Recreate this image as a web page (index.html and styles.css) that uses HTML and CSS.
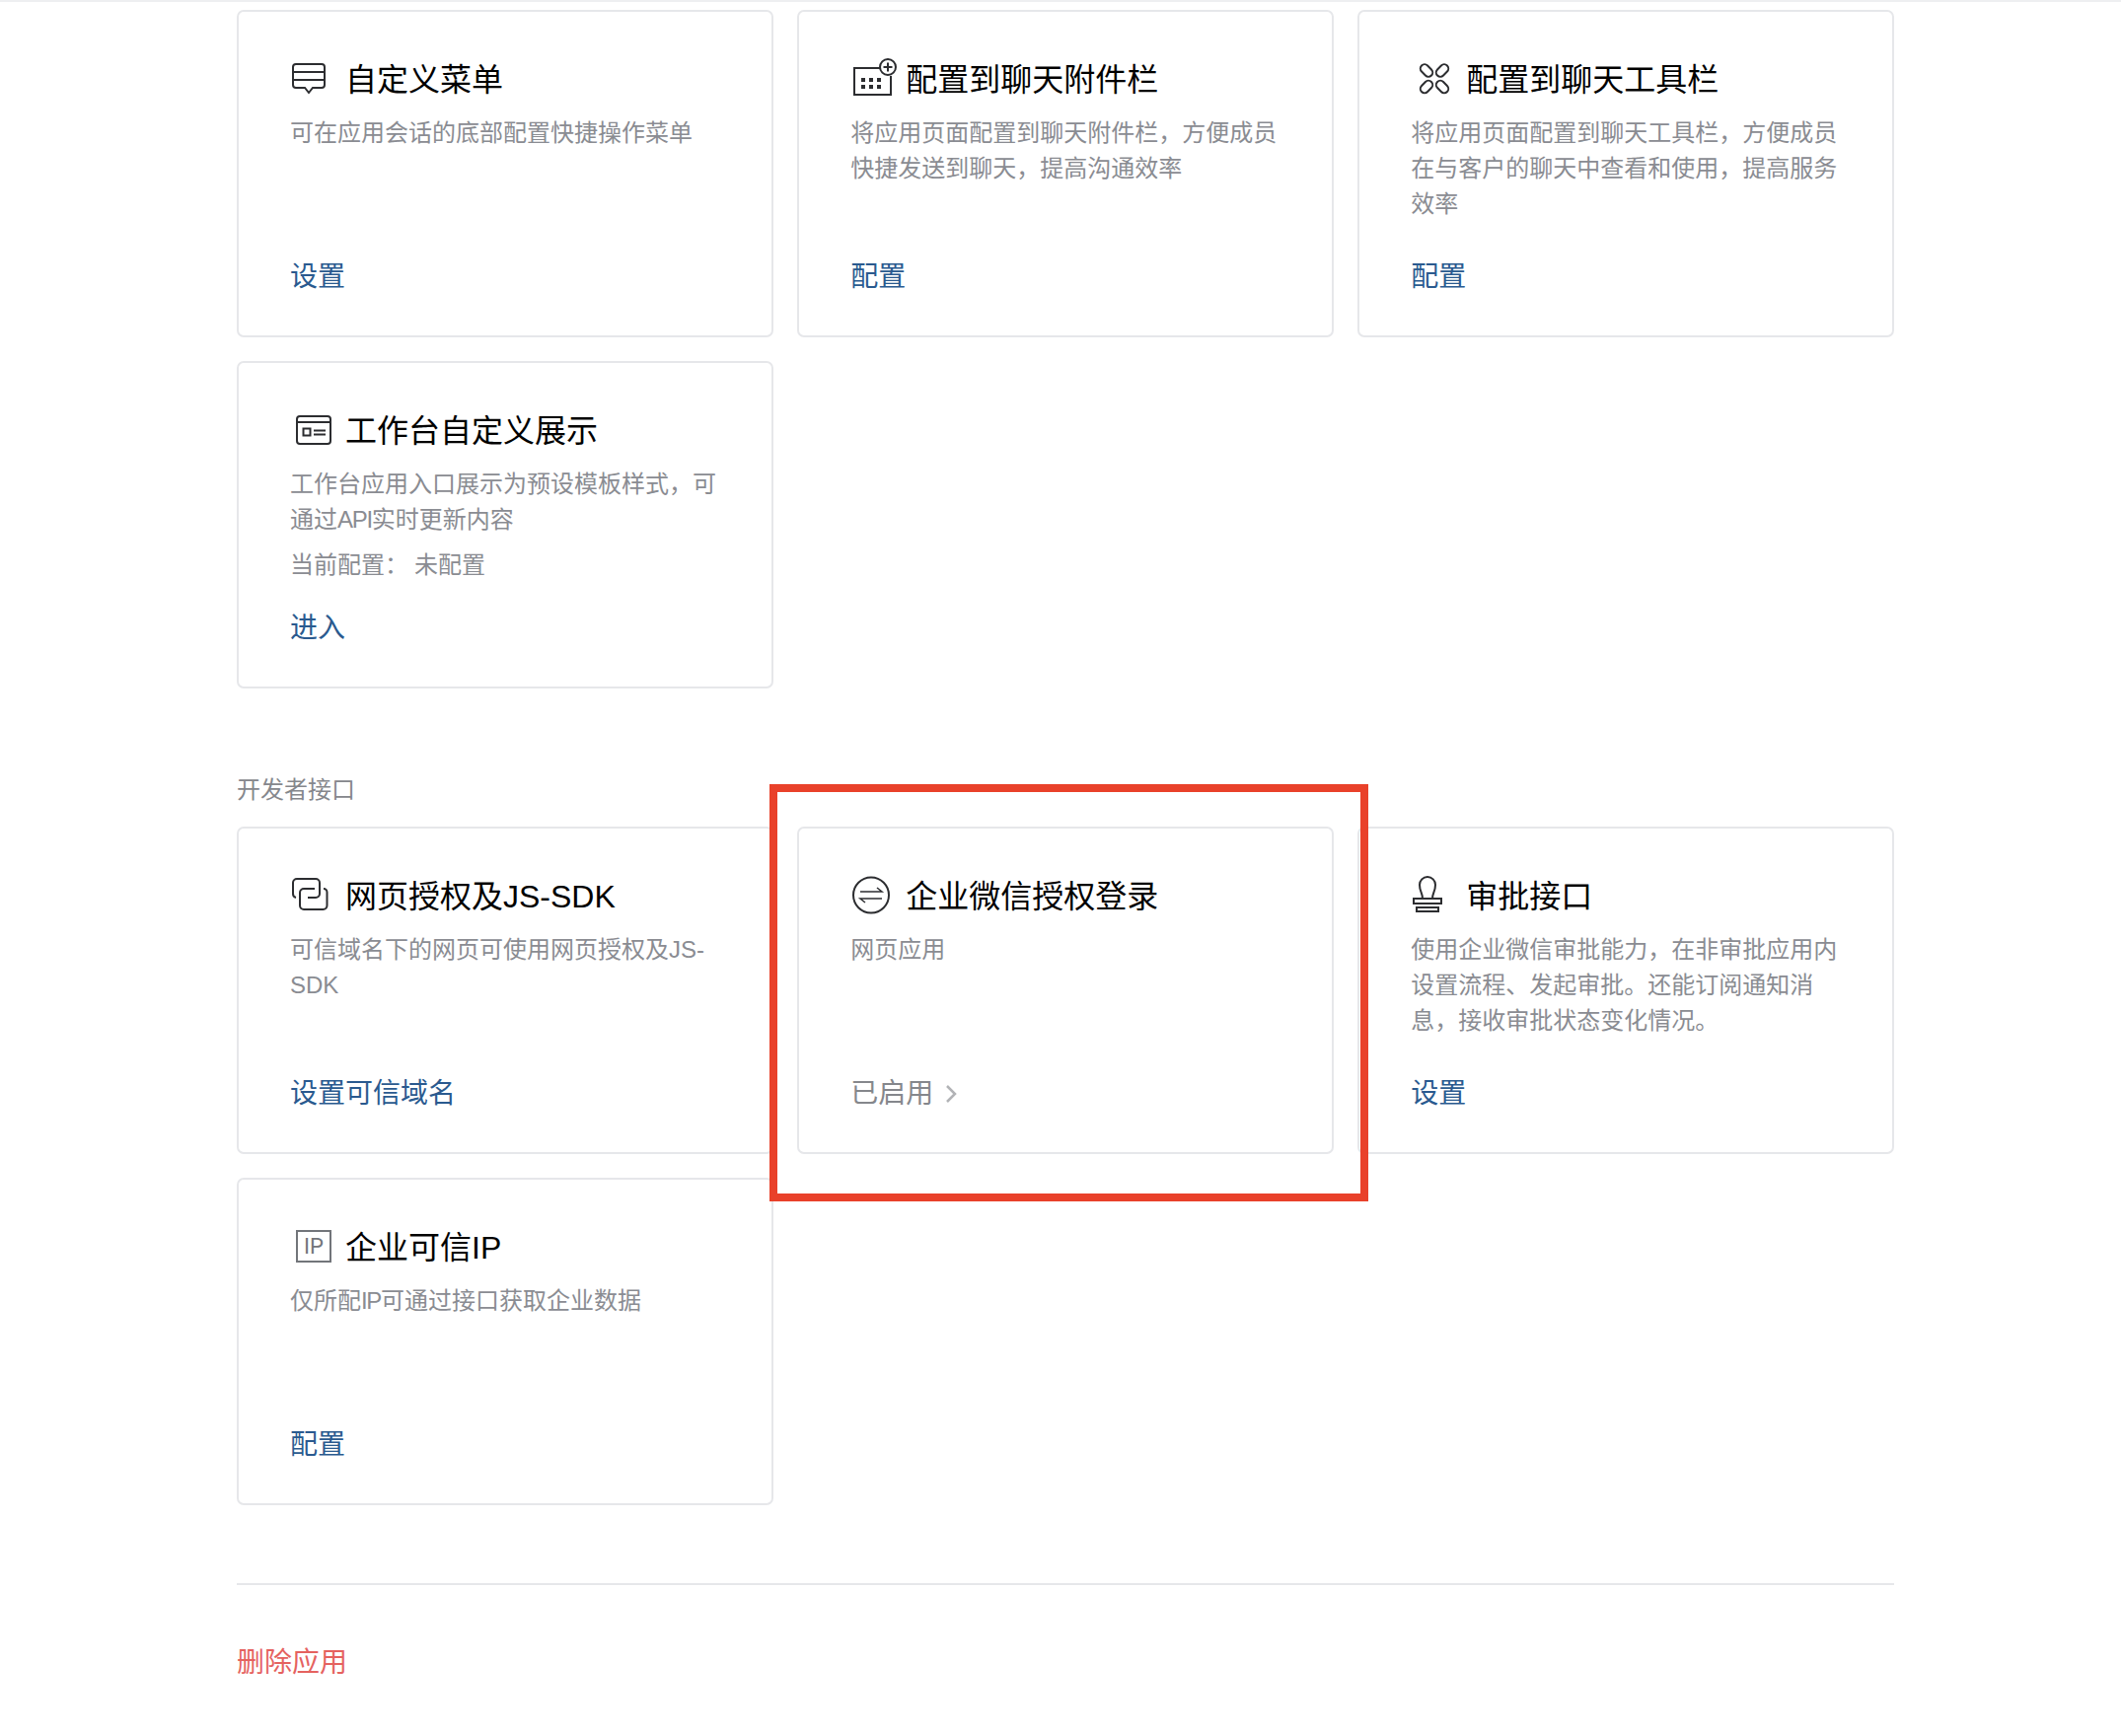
FILE: index.html
```html
<!DOCTYPE html>
<html lang="zh-CN">
<head>
<meta charset="utf-8">
<title>应用管理</title>
<link rel="stylesheet" href="styles.css">
</head>
<body>
<main class="page">
  <section class="grid">
    <article class="card">
      <h3 class="card-title">
        <svg class="icon" viewBox="0 0 44 44"><path d="M6 7h26a3 3 0 0 1 3 3v18a3 3 0 0 1-3 3h-9l-4 5-4-5H6a3 3 0 0 1-3-3V10a3 3 0 0 1 3-3zM3 15h32M3 23h32"/></svg>
        <span>自定义菜单</span>
      </h3>
      <p class="desc">可在应用会话的底部配置快捷操作菜单</p>
      <a class="action">设置</a>
    </article>
    <article class="card">
      <h3 class="card-title">
        <svg class="icon" viewBox="0 0 44 44"><path d="M30 11H4v27h37V19"/><circle cx="38" cy="10" r="8"/><path d="M38 5.500v9M33.500 10h9"/><path class="dots" d="M11 21h4v4h-4zM19 21h4v4h-4zM27 21h4v4h-4zM11 28h4v4h-4zM19 28h4v4h-4zM27 28h4v4h-4z"/></svg>
        <span>配置到聊天附件栏</span>
      </h3>
      <p class="desc">将应用页面配置到聊天附件栏，方便成员快捷发送到聊天，提高沟通效率</p>
      <a class="action">配置</a>
    </article>
    <article class="card">
      <h3 class="card-title">
        <svg class="icon" viewBox="0 0 44 44"><rect x="9" y="9.250" width="14" height="8.500" rx="4.250" transform="rotate(45 16 13.500)"/><rect x="25" y="9.250" width="14" height="8.500" rx="4.250" transform="rotate(-45 32 13.500)"/><rect x="9" y="25.750" width="14" height="8.500" rx="4.250" transform="rotate(-45 16 30)"/><rect x="25" y="25.750" width="14" height="8.500" rx="4.250" transform="rotate(45 32 30)"/></svg>
        <span>配置到聊天工具栏</span>
      </h3>
      <p class="desc">将应用页面配置到聊天工具栏，方便成员在与客户的聊天中查看和使用，提高服务效率</p>
      <a class="action">配置</a>
    </article>
    <article class="card">
      <h3 class="card-title">
        <svg class="icon" viewBox="0 0 44 44"><rect x="7" y="8" width="34" height="28" rx="3"/><path d="M7 14h34M13.500 20.500h7v7h-7zM24 22.500h12M24 26.500h12"/></svg>
        <span>工作台自定义展示</span>
      </h3>
      <p class="desc">工作台应用入口展示为预设模板样式，可<br>通过<span class="tight">API</span>实时更新内容</p>
      <p class="meta"><span class="meta-label">当前配置：</span><span>未配置</span></p>
      <a class="action">进入</a>
    </article>
  </section>

  <h2 class="section-label">开发者接口</h2>

  <section class="grid">
    <article class="card">
      <h3 class="card-title">
        <svg class="icon" viewBox="0 0 44 44"><path d="M6 24a4 4 0 0 1-3-4V9a4 4 0 0 1 4-4h19a4 4 0 0 1 4 4v11a4 4 0 0 1-4 4h-8"/><path d="M34 15a3.500 3.500 0 0 1 3.500 3.500V32a4 4 0 0 1-4 4H14a4 4 0 0 1-4-4V19a4 4 0 0 1 4-4h11"/></svg>
        <span>网页授权及JS-SDK</span>
      </h3>
      <p class="desc">可信域名下的网页可使用网页授权及JS-SDK</p>
      <a class="action">设置可信域名</a>
    </article>
    <article class="card card-highlighted">
      <h3 class="card-title">
        <svg class="icon" viewBox="0 0 44 44"><circle cx="21" cy="21.500" r="18"/><path class="thin" d="M10 18h22l-5-4M32 25H10l5 4"/></svg>
        <span>企业微信授权登录</span>
      </h3>
      <p class="desc">网页应用</p>
      <a class="action action-muted">已启用<svg class="chevron" viewBox="0 0 12 20"><path d="M2 2l8 8-8 8"/></svg></a>
      <div class="highlight"></div>
    </article>
    <article class="card">
      <h3 class="card-title">
        <svg class="icon" viewBox="0 0 44 44"><path d="M12 25c0-6-3-7-3-14a8 8 0 0 1 16 0c0 7-3 8-3 14"/><path d="M3 25h28v5H3zM6 34h22v4H6z"/></svg>
        <span>审批接口</span>
      </h3>
      <p class="desc">使用企业微信审批能力，在非审批应用内设置流程、发起审批。还能订阅通知消息，接收审批状态变化情况。</p>
      <a class="action">设置</a>
    </article>
    <article class="card">
      <h3 class="card-title">
        <svg class="icon icon-grey" viewBox="0 0 44 44"><rect x="7" y="6" width="34" height="31"/><text class="icon-text" x="24" y="29">IP</text></svg>
        <span>企业可信IP</span>
      </h3>
      <p class="desc">仅所配<span class="tight">IP</span>可通过接口获取企业数据</p>
      <a class="action">配置</a>
    </article>
  </section>

  <hr class="divider">
  <a class="danger">删除应用</a>
</main>
</body>
</html>
```
FILE: styles.css
```css
* { box-sizing: border-box; }
html, body { margin: 0; padding: 0; background: #fff; }
body {
  font-family: "Liberation Sans", "Noto Sans CJK SC", sans-serif;
  color: #000;
  border-top: 2px solid #eeeff1;
}
.page {
  padding: 8px 230px 53px 240px;
}
.grid {
  display: grid;
  grid-template-columns: repeat(3, 1fr);
  column-gap: 24.500px;
  row-gap: 24px;
}
.card {
  position: relative;
  display: flex;
  flex-direction: column;
  min-height: 332px;
  padding: 47px 52px 39px;
  border: 2px solid #e6e7ea;
  border-radius: 7px;
  background: #fff;
}
.card-title {
  display: flex;
  align-items: center;
  gap: 12px;
  height: 44px;
  margin: 0 0 14px;
  font-size: 32px;
  font-weight: 400;
  line-height: 44px;
  color: #000;
}
.icon {
  flex: none;
  width: 44px;
  height: 44px;
  margin-top: -2px;
  overflow: visible;
  fill: none;
  stroke: #2c2d30;
  stroke-width: 2;
}
.icon .dots { fill: #2c2d30; stroke: none; }
.icon .thin { stroke-width: 1.500; }
.icon-grey { stroke: #72757a; }
.icon-text {
  font-family: Roboto, sans-serif;
  font-size: 22px;
  font-weight: 400;
  fill: #72757a;
  stroke: none;
  text-anchor: middle;
}
.desc {
  margin: 0;
  font-size: 24px;
  line-height: 36px;
  color: #8a8c92;
}
.tight { letter-spacing: -1.300px; }
.meta {
  display: flex;
  gap: 6px;
  margin: 10px 0 0;
  font-size: 24px;
  line-height: 36px;
  color: #8a8c92;
}
.action {
  display: flex;
  align-items: center;
  margin-top: auto;
  font-size: 28px;
  line-height: 40px;
  color: #2a5a8f;
}
.action-muted { color: #85878c; }
.chevron {
  width: 12px;
  height: 20px;
  margin-left: 12px;
  fill: none;
  stroke: #b2b3b6;
  stroke-width: 2.500;
}
.highlight {
  position: absolute;
  top: -45px;
  left: -30px;
  right: -37px;
  bottom: -50px;
  border: 8px solid #e9412a;
  z-index: 2;
  pointer-events: none;
}
.section-label {
  margin: 85px 0 19px;
  font-size: 24px;
  font-weight: 400;
  line-height: 36px;
  color: #85878c;
}
.divider {
  height: 2px;
  margin: 79px 0 59px;
  border: 0;
  background: #e6e7ea;
}
.danger {
  display: block;
  font-size: 28px;
  line-height: 40px;
  color: #e5625f;
}
```
